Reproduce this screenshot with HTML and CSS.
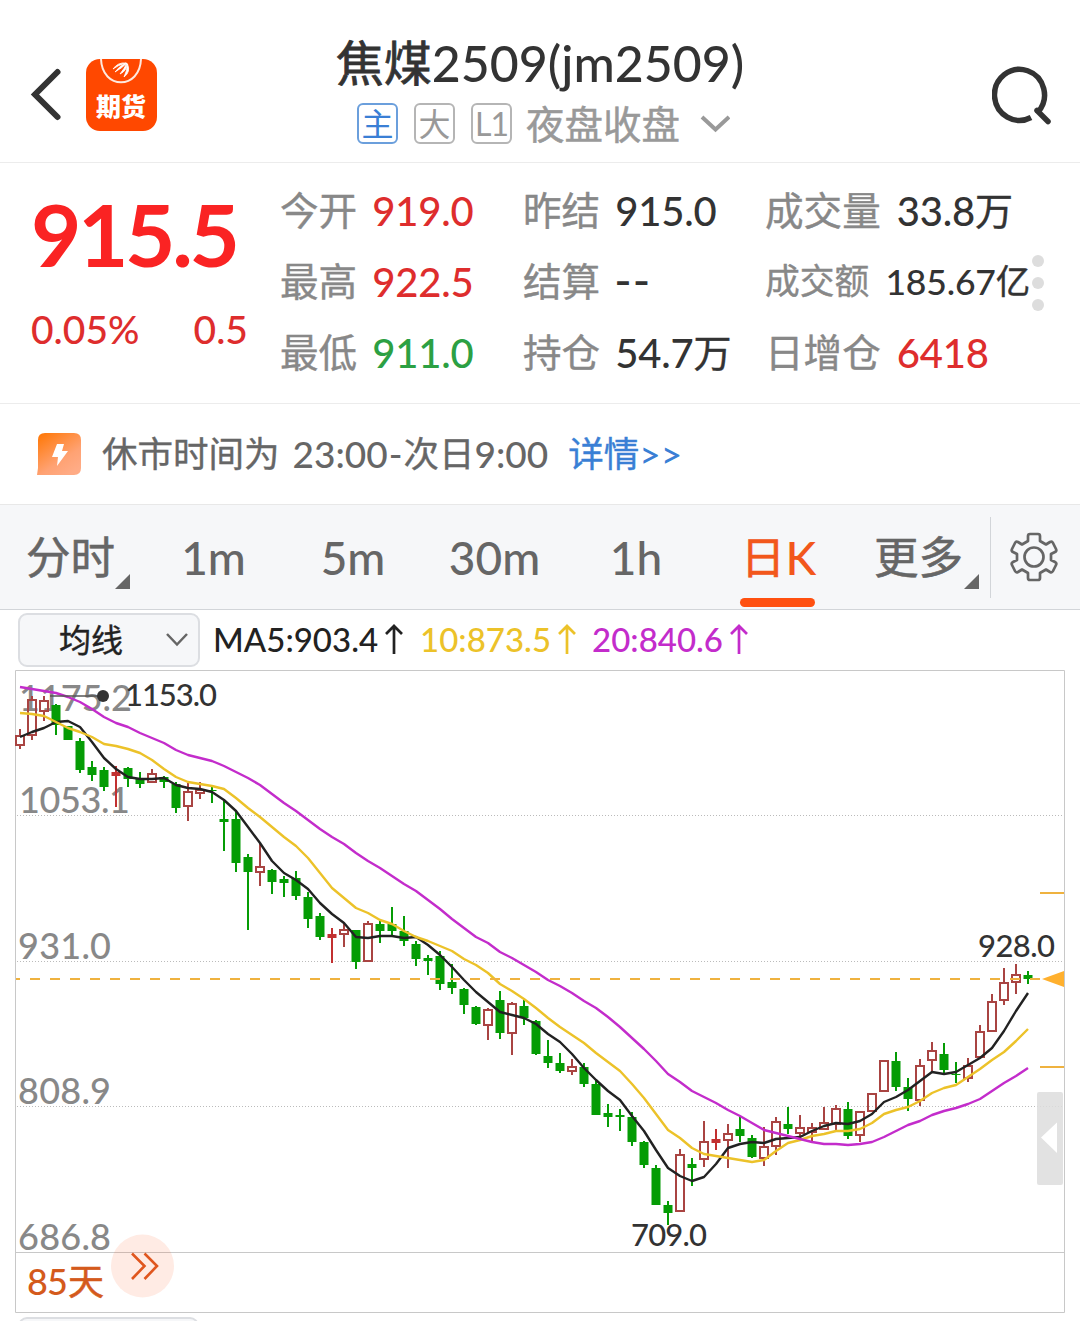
FILE: index.html
```html
<!DOCTYPE html>
<html lang="zh-CN">
<head>
<meta charset="utf-8">
<title>焦煤2509(jm2509)</title>
<link rel="stylesheet" href="styles.css">
</head>
<body>
<header class="header">
  <div class="header-left">
    <svg class="back" width="34" height="56" viewBox="0 0 34 56"><path d="M29.500 5L7 27.500L29.500 50" fill="none" stroke="#333" stroke-width="6" stroke-linecap="round"/></svg>
    <div class="logo">
      <svg class="logo-mark" width="42" height="26" viewBox="0 0 42 26"><path d="M1 0C2 31 40 31 41 0" fill="none" stroke="#ffe9de" stroke-width="2"/><path d="M13 10Q18 3 26 4Q18 6 13 10ZM15 13Q20 6 27 4Q22 9 15 13ZM20 15Q24 10 27 4Q27 12 20 15ZM24 18Q27 12 27.500 5Q31 13 24 18Z" fill="#fff" stroke="#fff" stroke-width=".8"/></svg>
      <span class="logo-text">期货</span>
    </div>
  </div>
  <div class="header-center">
    <h1 class="title"><span class="cn">焦煤</span><span class="code">2509(jm2509)</span></h1>
    <div class="subtitle">
      <span class="badge badge-main">主</span><span class="badge">大</span><span class="badge badge-level">L1</span>
      <span class="session">夜盘收盘</span>
      <svg width="30" height="20" viewBox="0 0 30 20"><path d="M2 3L15.500 15.500L29 3" fill="none" stroke="#999" stroke-width="4"/></svg>
    </div>
  </div>
  <svg class="search" width="62" height="62" viewBox="0 0 62 62"><path d="M39 53.500A25 25.500 0 1 1 46 48" fill="none" stroke="#333" stroke-width="5.500"/><path d="M45 46.500L56 57.500" fill="none" stroke="#333" stroke-width="5.500" stroke-linecap="round"/></svg>
</header>

<section class="quote">
  <div class="price-block">
    <div class="price">915.5</div>
    <div class="change"><span>0.05%</span><span>0.5</span></div>
  </div>
  <dl class="stats">
    <div class="stat"><dt>今开</dt><dd class="up">919.0</dd></div>
    <div class="stat"><dt>昨结</dt><dd>915.0</dd></div>
    <div class="stat"><dt>成交量</dt><dd>33.8<span class="cn">万</span></dd></div>
    <div class="stat"><dt>最高</dt><dd class="up">922.5</dd></div>
    <div class="stat"><dt>结算</dt><dd class="dashes">--</dd></div>
    <div class="stat stat-small"><dt>成交额</dt><dd>185.67<span class="cn">亿</span></dd></div>
    <div class="stat"><dt>最低</dt><dd class="down">911.0</dd></div>
    <div class="stat"><dt>持仓</dt><dd>54.7<span class="cn">万</span></dd></div>
    <div class="stat"><dt>日增仓</dt><dd class="up">6418</dd></div>
  </dl>
  <div class="dots"><i></i><i></i><i></i></div>
</section>

<section class="notice">
  <svg width="44" height="42" viewBox="0 0 44 42"><defs><linearGradient id="flash" x1="0" y1="0" x2=".7" y2="1"><stop offset="0" stop-color="#ff7500"/><stop offset=".7" stop-color="#ffa273"/><stop offset="1" stop-color="#ffab85"/></linearGradient></defs><path d="M8 0H37Q44 0 44 7V35Q44 42 37 42H0L1 35V7Q1 0 8 0Z" fill="url(#flash)"/><path d="M20 11H27L25 18H31L20 33L21 24H15Z" fill="#fff"/></svg>
  <p class="notice-text"><span class="cn">休市时间为</span><span class="hours">23:00<span class="hyphen">-</span><span class="cn">次日</span>9:00</span></p>
  <a class="notice-link"><span class="cn">详情</span>&gt;&gt;</a>
</section>

<nav class="tabs">
  <div class="tab tab-menu"><span class="cn">分时</span></div>
  <div class="tab">1m</div>
  <div class="tab">5m</div>
  <div class="tab">30m</div>
  <div class="tab">1h</div>
  <div class="tab tab-active"><span class="cn">日</span>K</div>
  <div class="tab tab-menu tab-more"><span class="cn">更多</span></div>
  <div class="settings">
    <svg width="48" height="50" viewBox="-24 -25 48 50"><path d="M-6 -21Q-6 -23 -4 -23H4Q6 -23 6 -21V-16L12 -12.500L16 -15Q18 -16 19 -14L22 -8Q23 -6 21 -5L17 -3V3L21 5Q23 6 22 8L19 14Q18 16 16 15L12 12.500L6 16V21Q6 23 4 23H-4Q-6 23 -6 21V16L-12 12.500L-16 15Q-18 16 -19 14L-22 8Q-23 6 -21 5L-17 3V-3L-21 -5Q-23 -6 -22 -8L-19 -14Q-18 -16 -16 -15L-12 -12.500L-6 -16Z" fill="none" stroke="#666" stroke-width="2.700" stroke-linejoin="round"/><circle r="9.500" fill="none" stroke="#666" stroke-width="2.700"/></svg>
  </div>
</nav>

<div class="averages">
  <div class="picker"><span>均线</span><svg width="24" height="16" viewBox="0 0 24 16"><path d="M2 2L12 12.500L22 2" fill="none" stroke="#666" stroke-width="2.500"/></svg></div>
  <span class="ma ma5">MA5:903.4<svg width="18" height="30" viewBox="0 0 18 30"><path d="M9 30V2M1 10L9 2L17 10" fill="none" stroke="currentColor" stroke-width="2.700"/></svg></span>
  <span class="ma ma10">10:873.5<svg width="18" height="30" viewBox="0 0 18 30"><path d="M9 30V2M1 10L9 2L17 10" fill="none" stroke="currentColor" stroke-width="2.700"/></svg></span>
  <span class="ma ma20">20:840.6<svg width="18" height="30" viewBox="0 0 18 30"><path d="M9 30V2M1 10L9 2L17 10" fill="none" stroke="currentColor" stroke-width="2.700"/></svg></span>
</div>

<main class="chart">
  <svg width="1080" height="650" viewBox="0 667 1080 650">
    <g fill="none" stroke="#c8c8c8">
      <path d="M15.500 670.500H1064.500V1312.500H15.500ZM15.500 1252.500H1064.500"/>
      <path d="M17 815.500H1064M17 961.500H1064M17 1106.500H1064" stroke-dasharray="1 2" stroke="#bbb"/>
    </g>
    <g class="axis">
      <text x="19" y="711" textLength="113">1175.2</text>
      <text x="19" y="813" textLength="111">1053.1</text>
      <text x="18" y="959" textLength="93">931.0</text>
      <text x="18" y="1104" textLength="93">808.9</text>
      <text x="18" y="1250" textLength="93">686.8</text>
    </g>
    <g id="candles"></g>
    <g id="lines" fill="none" stroke-width="2.400" stroke-linejoin="round"></g>
    <path d="M16 979H20M30 979H1040" stroke="#efb23f" stroke-width="2" stroke-dasharray="10 10"/>
    <path d="M1040 893H1064M1040 1067H1064" stroke="#efb23f" stroke-width="2"/>
    <path d="M1042 979L1064 971V987Z" fill="#ffb02e"/>
    <path d="M50 696H103" stroke="#555" stroke-width="1.500"/><circle cx="103" cy="696" r="6" fill="#333"/>
    <g class="extreme">
      <text x="125" y="706" textLength="92">1153.0</text>
      <text x="978" y="957" textLength="77">928.0</text>
      <text x="631" y="1246" textLength="76">709.0</text>
    </g>
    <rect x="1037" y="1092" width="26" height="93" rx="2" fill="#ddd" fill-opacity=".85"/>
    <path d="M1041 1137.500L1057 1122.500V1153Z" fill="#fff"/>
    <circle cx="142.500" cy="1266" r="31.500" fill="#ff5a20" fill-opacity=".12"/>
    <path d="M132 1253.500L144.500 1266L132 1279M144.500 1253.500L157 1266L144.500 1279" fill="none" stroke="#e0561e" stroke-width="2.600"/>
    <g class="days"><text x="27" y="1295" textLength="41">85</text><text class="days-cn" x="68" y="1295">天</text></g>
  </svg>
</main>
<div class="next-picker"></div>
<script src="chart.js"></script>
</body>
</html>
```
FILE: styles.css
```css
* { box-sizing: border-box; }
body {
  margin: 0;
  width: 1080px;
  height: 1321px;
  overflow: hidden;
  background: #fff;
  color: #333;
  font-family: Lato, "Noto Sans CJK SC", sans-serif;
  font-weight: 500;
}
svg { display: block; flex: none; }
h1, p, dl, dt, dd { margin: 0; font-weight: 500; }
.cn { font-family: "Noto Sans CJK SC", sans-serif; font-weight: 400; line-height: 1; vertical-align: 1px; -webkit-text-stroke: .4px currentColor; }

.header {
  display: grid;
  grid-template-columns: 300px 480px 300px;
  height: 163px;
  border-bottom: 1px solid #ececec;
}
.header-left { display: flex; align-items: flex-start; padding: 59px 0 0 28px; }
.back { margin-top: 8px; }
.logo {
  display: flex;
  flex-direction: column;
  align-items: center;
  width: 71px;
  height: 72px;
  margin-left: 23.500px;
  border-radius: 14px;
  background: #ff4800;
}
.logo-text { margin-top: 3px; color: #fff; font: 900 25px/34px "Noto Sans CJK SC", sans-serif; }
.header-center { display: flex; flex-direction: column; align-items: center; padding-top: 34px; }
.title { height: 62px; font-size: 50px; line-height: 58px; white-space: nowrap; }
.title .cn { font-size: 48px; -webkit-text-stroke-width: .8px; }
.subtitle { display: flex; align-items: center; height: 55px; width: 374px; margin-left: 8px; }
.badge {
  width: 41px;
  height: 41px;
  margin-right: 16px;
  border: 2px solid #b5b5b5;
  border-radius: 6px;
  color: #999;
  font: 400 32px/35px "Noto Sans CJK SC", sans-serif;
  text-align: center;
}
.badge-main { color: #3a7fd5; border-color: #6b9fdc; }
.badge-level { font-family: Lato, sans-serif; line-height: 38px; letter-spacing: -1px; margin-right: 14px; }
.session { color: #999; font: 400 38.500px/52px "Noto Sans CJK SC", sans-serif; margin: 0 20px 3px 0; -webkit-text-stroke: .5px #999; }
.search { justify-self: end; margin: 64px 26px 0 0; }

.quote { display: flex; height: 241px; border-bottom: 1px solid #ececec; }
.price-block { width: 280px; padding: 21px 0 0 31px; }
.price { color: #fa2323; font-size: 87px; font-weight: 700; line-height: 100px; letter-spacing: -3.400px; }
.change { display: flex; justify-content: space-between; width: 217px; padding-top: 20px; color: #de2d2d; font-size: 39px; line-height: 50px; }
.stats { display: grid; grid-template-columns: 243px 242px 265px; grid-auto-rows: 71px; padding-top: 11px; }
.stat { display: flex; align-items: baseline; white-space: nowrap; }
.stat dt { position: relative; top: -1px; color: #888; font: 400 38.600px/71px "Noto Sans CJK SC", sans-serif; margin-right: 15px; -webkit-text-stroke: .4px #888; }
.stat dd { font-size: 40px; line-height: 71px; letter-spacing: -.2px; }
.stat:nth-child(3n) dd { margin-left: 1px; }
.stat .cn { font-size: 38px; }
.stat .dashes { font-size: 47px; letter-spacing: 1px; margin-left: -1px; line-height: 60px; }
.stat-small dt { font-size: 34.800px; }
.stat-small dd { font-size: 35.600px; }
.stat-small .cn { font-size: 34.500px; }
.stat .up, .up { color: #de2d2d; }
.down { color: #2ca043; }
.dots { display: flex; flex-direction: column; gap: 10px; padding-top: 92px; margin-left: 2px; }
.dots i { width: 12px; height: 12px; border-radius: 50%; background: #ddd; }

.notice { display: flex; align-items: center; height: 101px; padding-left: 37px; border-bottom: 1px solid #e8e8e8; color: #666; font-size: 37px; line-height: 60px; white-space: nowrap; }
.notice .cn { font-size: 35.500px; }
.notice-text { margin-left: 21px; }
.hours { margin-left: 13px; }
.hyphen { margin: 0 1px; }
.notice-link { margin-left: 20px; color: #3a7fd5; }

.tabs { display: grid; grid-template-columns: 156px 115px 164px 119px 164px 121px 151px 90px; height: 105px; background: #f6f7f9; border-bottom: 1px solid #d2d5d9; color: #666; font-size: 46px; line-height: 106px; white-space: nowrap; }
.tab .cn { font-size: 44.500px; -webkit-text-stroke-width: .6px; }
.tab { position: relative; text-align: center; }
.tab-menu { text-align: left; padding-left: 26px; }
.tab-menu::after { content: ""; display: block; position: absolute; right: 26px; bottom: 22px; width: 15px; height: 15px; background: #666; clip-path: polygon(100% 0, 100% 100%, 0 100%); }
.tab-more { padding-left: 35px; }
.tab-more::after { right: 11px; }
.tab-active { color: #f2571c; }
.tab-active::after { content: ""; position: absolute; left: 22px; bottom: 4px; width: 75px; height: 9px; border-radius: 5px; background: #ff5010; }
.settings { display: flex; align-items: center; height: 81px; margin-top: 12px; padding: 0 0 2px 19px; border-left: 1px solid #d2d5d9; }

.averages { display: flex; align-items: flex-start; height: 57px; padding: 3px 0 0 18px; }
.picker { display: flex; align-items: center; width: 182px; height: 54px; padding-left: 39px; border: 2px solid #dcdee2; border-radius: 9px; background: #f6f7f9; color: #222; font: 400 32px/50px "Noto Sans CJK SC", sans-serif; -webkit-text-stroke: .4px #222; }
.picker span { margin-top: -5px; }
.picker svg { margin-left: 42px; }
.ma { display: flex; align-items: center; font-size: 33px; line-height: 52px; margin-left: 13px; white-space: nowrap; }
.ma svg { margin-left: 7px; }
.ma5 { color: #222; }
.ma10 { color: #ecc229; margin-left: 17px; }
.ma20 { color: #c32ccb; margin-left: 16px; }

.chart { height: 650px; }
.chart text { font-family: Lato, "Noto Sans CJK SC", sans-serif; font-weight: 500; }
.axis { fill: #888; font-size: 36px; }
.extreme { fill: #333; font-size: 31px; }
.days { fill: #d45a1c; font-size: 36px; }
.chart .days-cn { font-size: 36px; font-family: "Noto Sans CJK SC", sans-serif; font-weight: 400; stroke: #d45a1c; stroke-width: .6px; }
.next-picker { width: 181px; height: 20px; margin-left: 18px; border: 2px solid #dcdee2; border-radius: 9px; background: #f6f7f9; }
```
FILE: chart.js
```javascript
// Each candle: kind (r = hollow rise, s = solid rise, g = fall), high, body top, body bottom, low
const candles = `r 729 735 746 749|r 696 699 736 740|r 696 700 712 721|g 704 705 725 735|g 726 726 740 740|g 738 741 770 773|g 761 767 775 781|g 767 770 787 791|s 766 772 776 807|g 767 768 779 787|g 772 779 784 788|r 769 773 783 783|g 776 777 782 788|g 782 784 808 813|r 783 791 807 821|r 782 789 794 799|g 787 790 791 803|g 799 819 822 851|g 811 819 863 872|g 854 857 872 930|r 843 866 873 886|g 869 870 882 894|g 876 879 883 897|g 871 878 896 900|g 892 897 919 928|g 913 916 937 940|s 928 934 938 963|r 924 929 935 947|g 930 930 962 969|r 921 923 962 962|g 921 924 931 943|g 907 924 931 937|g 916 931 941 946|g 941 944 959 966|g 955 958 961 975|g 951 956 984 990|g 964 982 988 994|g 988 989 1005 1014|g 1006 1007 1024 1025|r 1008 1009 1026 1040|g 991 1000 1033 1039|r 1002 1003 1034 1055|g 1000 1006 1018 1025|g 1020 1021 1054 1055|g 1040 1056 1063 1068|g 1053 1063 1071 1073|r 1059 1066 1072 1075|g 1063 1067 1084 1087|g 1080 1084 1115 1115|g 1104 1113 1117 1127|g 1109 1115 1117 1131|g 1112 1117 1142 1146|g 1141 1142 1165 1168|g 1165 1168 1205 1205|g 1201 1205 1213 1225|r 1149 1154 1212 1212|g 1158 1164 1168 1186|r 1121 1141 1160 1167|s 1129 1139 1143 1150|r 1124 1133 1141 1168|g 1116 1129 1136 1142|g 1135 1138 1157 1158|r 1127 1146 1159 1166|r 1117 1121 1147 1155|g 1107 1124 1129 1134|r 1115 1127 1134 1136|r 1123 1127 1133 1141|r 1107 1122 1130 1130|r 1105 1108 1125 1131|g 1102 1109 1136 1139|r 1111 1111 1136 1142|r 1093 1093 1112 1112|r 1060 1060 1092 1092|g 1052 1061 1087 1091|g 1078 1087 1099 1111|r 1059 1065 1101 1106|r 1042 1050 1061 1072|g 1043 1054 1070 1074|g 1062 1074 1075 1083|r 1058 1065 1079 1082|r 1025 1031 1058 1058|r 994 1001 1032 1032|r 968 982 1001 1005|r 964 974 983 994|g 971 975 979 984`.split("|");
const averages = {
  "#222": "737 732 728 722 721 727 742 758 769 777 779 779 778 785 788 789 792 800 811 827 843 861 873 880 889 903 914 923 937 938 936 936 938 937 945 955 967 980 992 1002 1012 1015 1018 1024 1034 1042 1054 1068 1080 1091 1100 1116 1131 1150 1168 1176 1181 1177 1164 1148 1144 1142 1143 1139 1138 1137 1131 1126 1123 1124 1121 1114 1102 1097 1090 1081 1072 1074 1072 1065 1058 1048 1031 1011 993",
  "#ecc229": "713 714 716 722 728 732 737 744 746 749 753 760 769 777 782 784 786 789 798 808 817 827 837 846 858 873 888 898 908 913 920 924 931 937 941 946 951 959 965 973 984 991 999 1008 1018 1027 1035 1043 1053 1062 1071 1084 1098 1114 1130 1138 1148 1154 1156 1158 1160 1162 1160 1151 1143 1140 1136 1134 1131 1131 1129 1123 1114 1110 1107 1101 1093 1088 1085 1077 1069 1060 1052 1041 1029",
  "#c32ccb": "687 689 691 693 697 702 709 717 723 727 733 738 743 750 755 758 761 766 772 778 785 794 803 811 820 829 837 844 853 861 868 876 884 891 900 909 919 928 937 943 952 958 965 972 980 986 993 1001 1008 1017 1027 1038 1049 1061 1074 1082 1091 1097 1103 1110 1116 1123 1130 1133 1136 1139 1142 1144 1144 1145 1144 1142 1137 1131 1125 1121 1115 1111 1108 1104 1099 1091 1083 1076 1068"
};
const x = i => 20 + 12 * i;

document.getElementById("candles").innerHTML = candles.map((entry, i) => {
  const [kind, ...values] = entry.split(" ");
  const [high, top, bottom, low] = values.map(Number);
  const color = kind === "g" ? "#059c05" : kind === "s" ? "#c23030" : "#a94442";
  const wick = `<path d="M${x(i)} ${high}V${top}M${x(i)} ${bottom}V${low}" stroke="${color}" stroke-width="2"/>`;
  const body = kind === "r"
    ? `<rect x="${x(i) - 4}" y="${top + 1}" width="8" height="${bottom - top - 2}" fill="none" stroke="${color}" stroke-width="2"/>`
    : `<rect x="${x(i) - 4.5}" y="${top}" width="9" height="${bottom - top}" fill="${color}"/>`;
  return wick + body;
}).join("");

document.getElementById("lines").innerHTML = Object.entries(averages).map(([color, values]) =>
  `<polyline stroke="${color}" points="${values.split(" ").map((y, i) => `${x(i)},${y}`).join(" ")}"/>`
).join("");
```
